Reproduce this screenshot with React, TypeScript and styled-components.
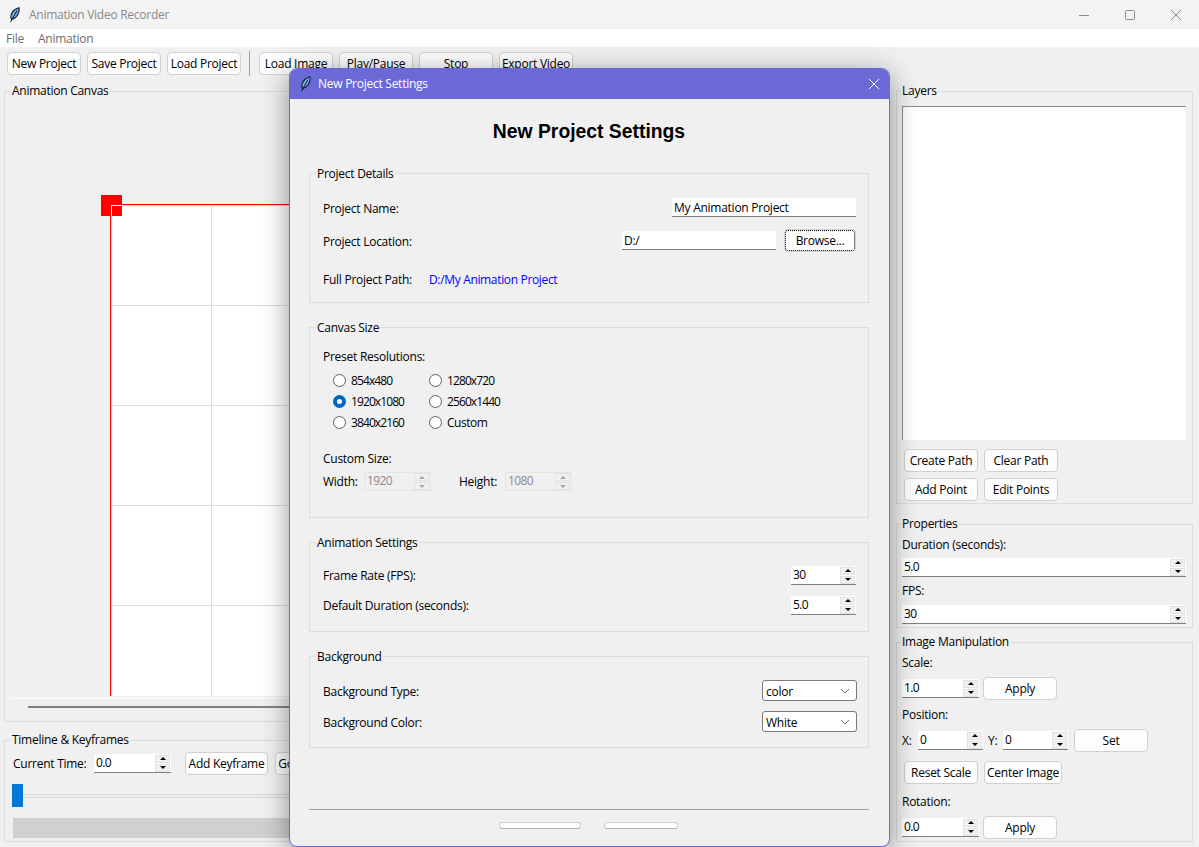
import React from 'react'
import styled, { createGlobalStyle } from 'styled-components'

const GlobalStyle = createGlobalStyle`
  html, body {
    margin: 0;
    background: #f0f0f0;
  }
  body {
    font-family: "Open Sans", "Noto Sans", sans-serif;
    font-size: 12px;
    letter-spacing: -0.26px;
    color: #000;
    overflow: hidden;
  }
  * {
    box-sizing: border-box;
  }
`
const AppWindow = styled.div`
  position: relative;
  width: 1199px;
  height: 847px;
  overflow: hidden;
  background: #f0f0f0;
`
const TitleBar = styled.div`
  display: flex;
  align-items: center;
  height: 29px;
  padding-left: 9px;
  background: #f3f3f3;
  color: #8a8a8a;
`
const TitleText = styled.span`
  margin-left: 9px;
`
const WindowControls = styled.div`
  display: flex;
  align-items: center;
  margin-left: auto;
  padding-right: 18px;
  gap: 36px;
  color: #8a8a8a;
`
const MenuBar = styled.div`
  display: flex;
  align-items: center;
  gap: 14px;
  height: 18px;
  padding-left: 6px;
  background: #fff;
  color: #6d6d6d;
`
const Toolbar = styled.div`
  display: flex;
  align-items: flex-start;
  gap: 6px;
  height: 37px;
  padding: 4px 7px 0;
`
const ToolSep = styled.div`
  width: 1px;
  height: 25px;
  margin: 0 3px 0 2px;
  background: #a0a0a0;
`
const Button = styled.button<{ $w?: number; $mt?: number; $ml?: number; $focus?: boolean }>`
  flex: none;
  width: ${p => p.$w || 74}px;
  height: 23px;
  margin: ${p => (p.$mt === undefined ? 1 : p.$mt)}px 0 0 ${p => p.$ml || 0}px;
  padding: 0;
  background: #fdfdfd;
  border: 1px solid #d0d0d0;
  border-radius: 4px;
  font: inherit;
  letter-spacing: inherit;
  color: #000;
  white-space: nowrap;
  overflow: hidden;
  ${p => p.$focus && 'outline: 1px dotted #000; outline-offset: -2px;'}
`
const Main = styled.div`
  display: flex;
  gap: 6px;
  padding-left: 4px;
`
const LeftColumn = styled.div`
  display: flex;
  flex-direction: column;
  gap: 11px;
  width: 886px;
`
const RightColumn = styled.div`
  display: flex;
  flex-direction: column;
  width: 297px;
`
const Group = styled.fieldset<{ $h: number; $mt?: number }>`
  display: block;
  min-width: 0;
  height: ${p => p.$h}px;
  margin: ${p => p.$mt || 0}px 0 0;
  padding: 0;
  border: 1px solid #dcdcdc;
  legend {
    height: 14px;
    margin-left: 6px;
    padding: 0 1px;
    line-height: 14px;
  }
`
const SideGroup = styled(Group)`
  padding: 0 6px 0 5px;
  legend {
    margin-left: -1px;
  }
`
const CanvasGroup = styled(Group)`
  padding: 0 0 0 6px;
  legend {
    margin-left: 0;
  }
`
const DialogGroup = styled(Group)`
  legend span {
    position: relative;
    top: 1px;
  }
`
const Viewport = styled.div`
  position: relative;
  height: 598px;
  overflow: hidden;
  padding: 106px 0 0 99px;
`
const CanvasArea = styled.div`
  position: relative;
  width: 1000px;
  height: 600px;
  border-top: 1px solid #f00;
  border-left: 1px solid #f00;
  background-color: #fff;
  background-image:
    linear-gradient(to right, transparent 99px, #ddd 99px),
    linear-gradient(to bottom, transparent 99px, #ddd 99px);
  background-size: 100px 100px;
  background-position: 1px 1px;
`
const Handle = styled.div`
  position: absolute;
  left: -10px;
  top: -10px;
  width: 21px;
  height: 21px;
  background: #f00;
  &::after {
    content: '';
    position: absolute;
    left: 10px;
    top: 10px;
    right: 0;
    bottom: 0;
    border-top: 1px solid #fff;
    border-left: 1px solid #fff;
  }
`
const HScroll = styled.div`
  margin-top: 2px;
  padding: 7px 0 0 17px;
  border-top: 1px solid #fff;
`
const HThumb = styled.div`
  height: 2px;
  background: #808080;
`
const TimelineBody = styled.div`
  padding: 5px 8px 0;
`
const Row = styled.div<{ $mt?: number }>`
  display: flex;
  align-items: center;
  margin-top: ${p => p.$mt || 0}px;
`
const FieldLabel = styled.span<{ $w?: number; $mt?: number; $ml?: number }>`
  display: block;
  flex: none;
  width: ${p => (p.$w ? `${p.$w}px` : 'auto')};
  margin-top: ${p => p.$mt || 0}px;
  margin-left: ${p => p.$ml || 0}px;
  line-height: 14px;
  white-space: nowrap;
`
const Slider = styled.div`
  display: flex;
  align-items: center;
  height: 23px;
  margin: 9px 0 0 -1px;
`
const SliderThumb = styled.div`
  width: 11px;
  height: 23px;
  background: #0078d7;
`
const SliderTrack = styled.div`
  flex: 1;
  height: 4px;
  border-top: 1px solid #d6d6d6;
  border-bottom: 1px solid #d6d6d6;
`
const Progress = styled.div`
  height: 20px;
  margin-top: 11px;
  background: #d0d0d0;
`
const LayerList = styled.div`
  height: 334px;
  margin-top: 8px;
  background: #fff;
  border-top: 1px solid #8a8a8a;
  border-left: 1px solid #8a8a8a;
`
const ButtonRow = styled.div<{ $mt: number }>`
  display: flex;
  gap: 6px;
  margin: ${p => p.$mt}px 0 0 2px;
`
const SpinBox = styled.div<{ $w?: number; $mt?: number; $off?: boolean; $ml?: number }>`
  display: flex;
  align-items: center;
  flex: none;
  width: ${p => (p.$w ? `${p.$w}px` : '100%')};
  height: 19px;
  margin-top: ${p => p.$mt || 0}px;
  margin-left: ${p => p.$ml || 0}px;
  padding-right: 1px;
  background: ${p => (p.$off ? '#f0f0f0' : '#fff')};
  border-bottom: 1px solid #808080;
  ${p => p.$off && 'border: 1px solid #e4e4e4;'}
`
const SpinInput = styled.input<{ $off?: boolean }>`
  flex: 1;
  min-width: 0;
  height: 16px;
  padding: 0 0 2px 2px;
  border: 0;
  background: transparent;
  font: inherit;
  letter-spacing: -0.6px;
  color: ${p => (p.$off ? '#8a8a8a' : '#000')};
  outline: none;
`
const SpinArrows = styled.div`
  display: flex;
  flex-direction: column;
  gap: 1px;
  width: 15px;
`
const SpinArrow = styled.div<{ $up?: boolean; $off?: boolean }>`
  display: flex;
  align-items: center;
  justify-content: center;
  height: 8px;
  background: #f0f0f0;
  border: 1px solid #e2e2e2;
  &::before {
    content: '';
    border-left: 3px solid transparent;
    border-right: 3px solid transparent;
    ${p => (p.$up ? 'border-bottom' : 'border-top')}: 3px solid ${p => (p.$off ? '#a6a6a6' : '#000')};
  }
`
const Dialog = styled.div`
  position: absolute;
  left: 289px;
  top: 68px;
  display: flex;
  flex-direction: column;
  width: 601px;
  height: 779px;
  background: #f0f0f0;
  border: 1px solid #6b69d6;
  border-radius: 8px;
  box-shadow: 0 6px 28px rgba(0, 0, 0, .42);
  overflow: hidden;
`
const DialogTitleBar = styled.div`
  display: flex;
  align-items: center;
  flex: none;
  height: 30px;
  padding: 0 10px 0 10px;
  background: #6b69d6;
  color: #fff;
`
const DialogTitle = styled.span`
  margin: 0 0 2px 7px;
`
const CloseIcon = styled.svg`
  margin: 0 0 1px auto;
`
const DialogBody = styled.div`
  display: flex;
  flex-direction: column;
  flex: 1;
  padding: 0 20px 0 19px;
`
const Heading = styled.h1`
  height: 22px;
  margin: 22px 0 23px;
  font: bold 19.33px/22px "Liberation Sans", Arial, sans-serif;
  letter-spacing: 0;
  text-align: center;
`
const GroupBody = styled.div<{ $pt: number }>`
  padding: ${p => p.$pt}px 12px 0 13px;
`
const SpacedRow = styled(Row)`
  justify-content: space-between;
`
const TextInput = styled.input<{ $w: number }>`
  flex: none;
  width: ${p => p.$w}px;
  height: 19px;
  margin-left: auto;
  padding: 1px 2px 0;
  background: #fff;
  border: 0;
  border-bottom: 1px solid #808080;
  font: inherit;
  letter-spacing: inherit;
  color: #000;
  outline: none;
`
const PathValue = styled.span`
  margin: 2px 0 0 15px;
  color: #0000ff;
  letter-spacing: -0.34px;
`
const RadioGrid = styled.div`
  display: grid;
  grid-template-columns: 96px 96px;
  grid-auto-rows: 21px;
  margin: 6px 0 0 10px;
`
const RadioLabel = styled.label<{ $digits?: boolean }>`
  display: flex;
  align-items: center;
  gap: 5px;
  letter-spacing: ${p => (p.$digits ? '-0.9px' : '-0.5px')};
`
const RadioMark = styled.input`
  appearance: none;
  flex: none;
  width: 13px;
  height: 13px;
  margin: 0;
  background: #fff;
  border: 1px solid #5f5f5f;
  border-radius: 50%;
  &:checked {
    border: 4px solid #0067c0;
  }
`
const SelectBox = styled.div`
  display: flex;
  align-items: center;
  justify-content: space-between;
  flex: none;
  width: 95px;
  height: 21px;
  margin-right: -1px;
  padding: 1px 6px 0 3px;
  background: #fff;
  border: 1px solid #7a7a7a;
  border-radius: 3px;
`
const DialogSeparator = styled.div`
  height: 1px;
  margin-top: 61px;
  background: #a0a0a0;
`
const DialogButtons = styled.div`
  display: flex;
  justify-content: center;
  gap: 23px;
  margin: 12px 0 0 -1px;
`
const SquashedButton = styled.div<{ $w: number }>`
  width: ${p => p.$w}px;
  height: 7px;
  background: #fdfdfd;
  border: 1px solid #cfcfcf;
  border-bottom-color: #b0b0b0;
  border-radius: 3px;
`

const Feather = () => (
  <svg width="11" height="16" viewBox="0 0 11 16">
    <path d="M2.5 12.5C0.5 8 4 2 10 0.8C10.8 5.5 8 11 3.6 12.3Z" fill="#79aee6" stroke="#0c1a2a" strokeWidth="1.1" />
    <path d="M8 3.5L1.5 15.2" stroke="#0c1a2a" strokeWidth="1" fill="none" />
  </svg>
)

const Spin: React.FC<{ value: string; w?: number; mt?: number; ml?: number; off?: boolean }> = ({ value, w, mt, ml, off }) => (
  <SpinBox $w={w} $mt={mt} $ml={ml} $off={off}>
    <SpinInput readOnly value={value} disabled={off} $off={off} />
    <SpinArrows>
      <SpinArrow $up $off={off} />
      <SpinArrow $off={off} />
    </SpinArrows>
  </SpinBox>
)

const Select: React.FC<{ value: string }> = ({ value }) => (
  <SelectBox>
    {value}
    <svg width="10" height="6" viewBox="0 0 10 6">
      <path d="M1 1L5 5L9 1" stroke="#6e6e6e" fill="none" />
    </svg>
  </SelectBox>
)

const resolutions = ['854x480', '1280x720', '1920x1080', '2560x1440', '3840x2160', 'Custom']

const App: React.FC = () => {
  return (
    <AppWindow>
      <GlobalStyle />
      <TitleBar>
        <Feather />
        <TitleText>Animation Video Recorder</TitleText>
        <WindowControls>
          <svg width="10" height="10" viewBox="0 0 10 10"><path d="M0 5.5H10" stroke="currentColor" /></svg>
          <svg width="10" height="10" viewBox="0 0 10 10"><rect x=".5" y=".5" width="9" height="9" rx="1" stroke="currentColor" fill="none" /></svg>
          <svg width="10" height="10" viewBox="0 0 10 10"><path d="M0 0L10 10M10 0L0 10" stroke="currentColor" /></svg>
        </WindowControls>
      </TitleBar>
      <MenuBar>
        <span>File</span>
        <span>Animation</span>
      </MenuBar>
      <Toolbar>
        <Button>New Project</Button>
        <Button>Save Project</Button>
        <Button>Load Project</Button>
        <ToolSep />
        <Button>Load Image</Button>
        <Button>Play/Pause</Button>
        <Button>Stop</Button>
        <Button>Export Video</Button>
      </Toolbar>
      <Main>
        <LeftColumn>
          <CanvasGroup $h={638}>
            <legend>Animation Canvas</legend>
            <Viewport>
              <CanvasArea>
                <Handle />
              </CanvasArea>
            </Viewport>
            <HScroll>
              <HThumb />
            </HScroll>
          </CanvasGroup>
          <Group $h={109}>
            <legend>Timeline &amp; Keyframes</legend>
            <TimelineBody>
              <Row>
                <FieldLabel $w={81}>Current Time:</FieldLabel>
                <Spin value="0.0" w={77} />
                <Button $w={83} $mt={0} $ml={14}>Add Keyframe</Button>
                <Button $w={90} $mt={0} $ml={7}>Go to Keyframe</Button>
              </Row>
              <Slider>
                <SliderThumb />
                <SliderTrack />
              </Slider>
              <Progress />
            </TimelineBody>
          </Group>
        </LeftColumn>
        <RightColumn>
          <SideGroup $h={420}>
            <legend>Layers</legend>
            <LayerList />
            <ButtonRow $mt={9}>
              <Button $mt={0}>Create Path</Button>
              <Button $mt={0}>Clear Path</Button>
            </ButtonRow>
            <ButtonRow $mt={6}>
              <Button $mt={0}>Add Point</Button>
              <Button $mt={0}>Edit Points</Button>
            </ButtonRow>
          </SideGroup>
          <SideGroup $h={111} $mt={13}>
            <legend>Properties</legend>
            <FieldLabel $mt={7}>Duration (seconds):</FieldLabel>
            <Spin value="5.0" mt={6} />
            <FieldLabel $mt={7}>FPS:</FieldLabel>
            <Spin value="30" mt={7} />
          </SideGroup>
          <SideGroup $h={207} $mt={7}>
            <legend>Image Manipulation</legend>
            <FieldLabel $mt={7}>Scale:</FieldLabel>
            <Row $mt={7}>
              <Spin value="1.0" w={77} />
              <Button $mt={0} $ml={4}>Apply</Button>
            </Row>
            <FieldLabel $mt={8}>Position:</FieldLabel>
            <Row $mt={7}>
              <FieldLabel $w={16}>X:</FieldLabel>
              <Spin value="0" w={65} />
              <FieldLabel $w={15} $ml={5}>Y:</FieldLabel>
              <Spin value="0" w={65} />
              <Button $mt={0} $ml={6}>Set</Button>
            </Row>
            <ButtonRow $mt={9}>
              <Button $mt={0}>Reset Scale</Button>
              <Button $w={78} $mt={0}>Center Image</Button>
            </ButtonRow>
            <FieldLabel $mt={11}>Rotation:</FieldLabel>
            <Row $mt={7}>
              <Spin value="0.0" w={77} />
              <Button $mt={0} $ml={4}>Apply</Button>
            </Row>
          </SideGroup>
        </RightColumn>
      </Main>
      <Dialog>
        <DialogTitleBar>
          <Feather />
          <DialogTitle>New Project Settings</DialogTitle>
          <CloseIcon width="10" height="10" viewBox="0 0 10 10">
            <path d="M0 0L10 10M10 0L0 10" stroke="#fff" />
          </CloseIcon>
        </DialogTitleBar>
        <DialogBody>
          <Heading>New Project Settings</Heading>
          <DialogGroup $h={137}>
            <legend><span>Project Details</span></legend>
            <GroupBody $pt={18}>
              <Row>
                <FieldLabel $mt={2}>Project Name:</FieldLabel>
                <TextInput readOnly value="My Animation Project" $w={184} />
              </Row>
              <Row $mt={12}>
                <FieldLabel $mt={2}>Project Location:</FieldLabel>
                <TextInput readOnly value="D:/" $w={154} />
                <Button $w={72} $mt={0} $ml={8} $focus>Browse...</Button>
              </Row>
              <Row $mt={17}>
                <FieldLabel $w={91} $mt={2}>Full Project Path:</FieldLabel>
                <PathValue>D:/My Animation Project</PathValue>
              </Row>
            </GroupBody>
          </DialogGroup>
          <DialogGroup $h={198} $mt={17}>
            <legend><span>Canvas Size</span></legend>
            <GroupBody $pt={16}>
              <FieldLabel>Preset Resolutions:</FieldLabel>
              <RadioGrid>
                {resolutions.map(r => (
                  <RadioLabel key={r} $digits={r !== 'Custom'}>
                    <RadioMark type="radio" name="res" readOnly checked={r === '1920x1080'} />
                    {r}
                  </RadioLabel>
                ))}
              </RadioGrid>
              <FieldLabel $mt={19}>Custom Size:</FieldLabel>
              <Row $mt={6}>
                <FieldLabel $w={41}>Width:</FieldLabel>
                <Spin value="1920" w={67} off />
                <FieldLabel $w={46} $ml={28}>Height:</FieldLabel>
                <Spin value="1080" w={67} off />
              </Row>
            </GroupBody>
          </DialogGroup>
          <DialogGroup $h={97} $mt={17}>
            <legend><span>Animation Settings</span></legend>
            <GroupBody $pt={17}>
              <SpacedRow>
                <FieldLabel>Frame Rate (FPS):</FieldLabel>
                <Spin value="30" w={65} />
              </SpacedRow>
              <SpacedRow $mt={11}>
                <FieldLabel>Default Duration (seconds):</FieldLabel>
                <Spin value="5.0" w={65} />
              </SpacedRow>
            </GroupBody>
          </DialogGroup>
          <DialogGroup $h={99} $mt={17}>
            <legend><span>Background</span></legend>
            <GroupBody $pt={17}>
              <SpacedRow>
                <FieldLabel $mt={2}>Background Type:</FieldLabel>
                <Select value="color" />
              </SpacedRow>
              <SpacedRow $mt={10}>
                <FieldLabel $mt={2}>Background Color:</FieldLabel>
                <Select value="White" />
              </SpacedRow>
            </GroupBody>
          </DialogGroup>
          <DialogSeparator />
          <DialogButtons>
            <SquashedButton $w={82} />
            <SquashedButton $w={74} />
          </DialogButtons>
        </DialogBody>
      </Dialog>
    </AppWindow>
  )
}

export default App
